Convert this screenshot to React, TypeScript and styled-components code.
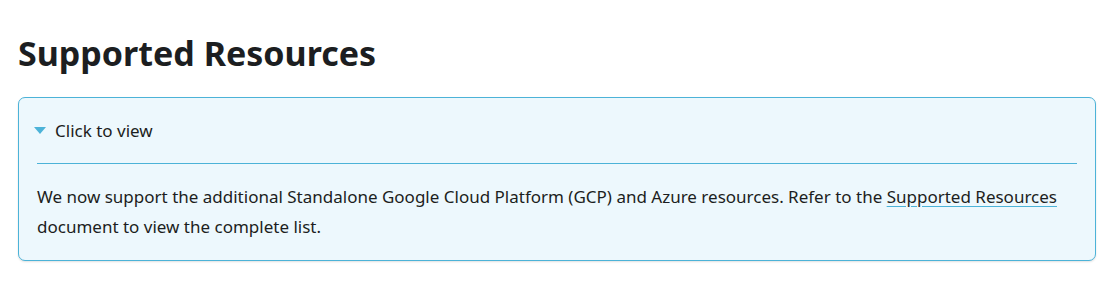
import * as React from "react";
import styled, { createGlobalStyle } from "styled-components";

const GlobalStyle = createGlobalStyle`
  body {
    margin: 0;
    background: #ffffff;
    font-family: "Noto Sans", "Open Sans", Arial, sans-serif;
    color: #1c1e21;
  }
`;

const Page = styled.main`
  padding: 28px 18px 18px 18px;
`;

const Title = styled.h1`
  margin: 0 0 19px 0;
  font-size: 34px;
  line-height: 50px;
  font-weight: 700;
  color: #1c1e21;
`;

const Details = styled.details`
  border: 1px solid #4cb3d8;
  border-radius: 7px;
  background: #edf8fd;
  box-shadow: 0 1px 2px rgba(0, 0, 0, 0.12);
  padding: 0 18px 18px 18px;
`;

const Summary = styled.summary`
  list-style: none;
  display: flex;
  align-items: center;
  gap: 9px;
  height: 65px;
  font-size: 17px;
  color: #1c1e21;
  cursor: pointer;
  border-bottom: 1px solid #4cb3d8;

  &::-webkit-details-marker {
    display: none;
  }
`;

const Caret = styled.span`
  width: 0;
  height: 0;
  border-left: 6px solid transparent;
  border-right: 6px solid transparent;
  border-top: 7px solid #4cb3d8;
  margin-left: -3px;
`;

const Body = styled.p`
  margin: 18px 0 0 0;
  font-size: 17px;
  line-height: 30px;
  color: #1c1e21;
`;

const DocLink = styled.a`
  color: #1c1e21;
  text-decoration: underline;
  text-decoration-color: #4cb3d8;
  text-underline-offset: 3px;
`;

export default function App() {
  return (
    <>
      <GlobalStyle />
      <Page>
        <Title>Supported Resources</Title>
        <Details open>
          <Summary>
            <Caret />
            Click to view
          </Summary>
          <Body>
            We now support the additional Standalone Google Cloud Platform (GCP) and Azure
            resources. Refer to the <DocLink href="#">Supported Resources</DocLink> document to
            view the complete list.
          </Body>
        </Details>
      </Page>
    </>
  );
}
